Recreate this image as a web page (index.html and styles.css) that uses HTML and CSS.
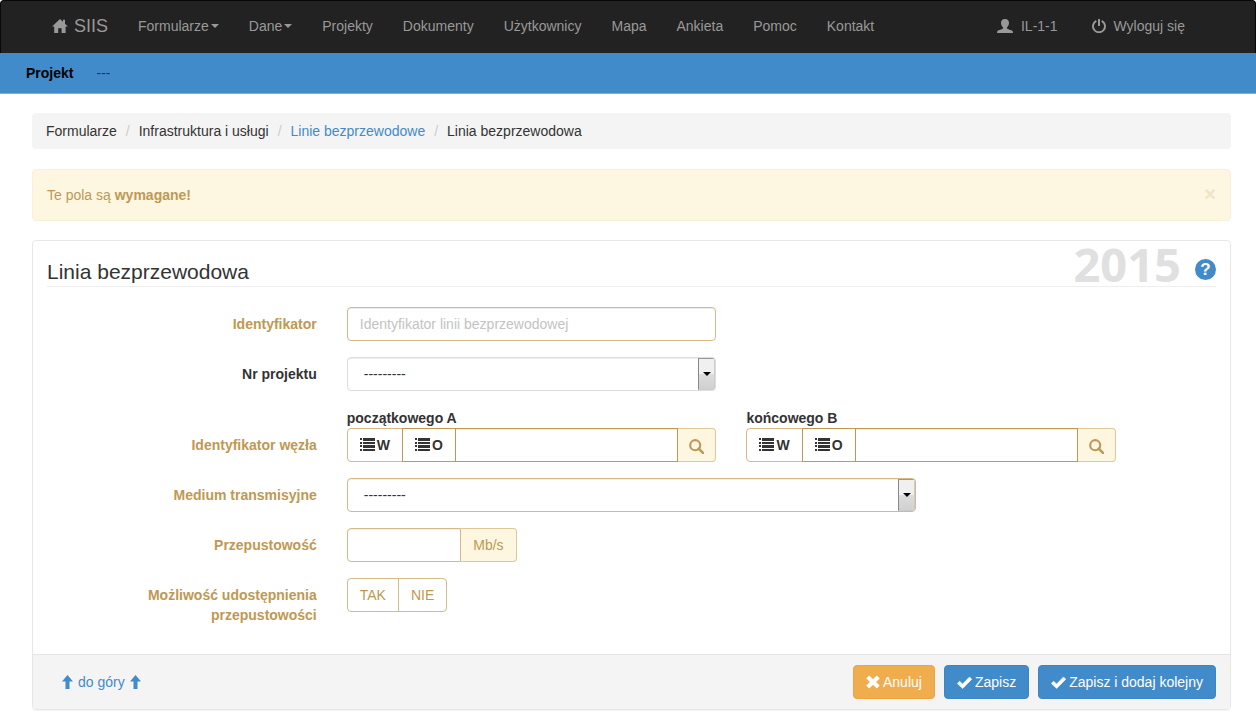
FILE: index.html
```html
<!DOCTYPE html>
<html lang="pl">
<head>
<meta charset="utf-8">
<meta name="viewport" content="width=device-width, initial-scale=1">
<title>SIIS – Linia bezprzewodowa</title>
<link rel="stylesheet" href="styles.css">
</head>
<body>
<svg class="sprite" aria-hidden="true">
  <symbol id="i-home" viewBox="0 0 16 14"><path d="M8 0 0 7.6h2.2V14h4V9.2h3.4V14h4V7.6H16L13 4.700V.8h-2v2z"/></symbol>
  <symbol id="i-user" viewBox="0 0 16 14"><path d="M8 0C5.500 0 4 1.500 4 3.800c0 2 .9 3.700 2 4.600v1.200c-.4.8-4.500 1.400-5.500 2.400-.4.500-.5 1.200-.5 2h16c0-.8-.1-1.500-.5-2-1-1-5.100-1.600-5.500-2.400V8.400c1.100-.9 2-2.600 2-4.600C12 1.500 10.500 0 8 0z"/></symbol>
  <symbol id="i-power" viewBox="0 0 14 14"><path d="M4.300 1.900A6 6 0 1 0 9.700 1.900" fill="none" stroke="currentColor" stroke-width="1.900"/><path d="M6 0h2v7H6z"/></symbol>
  <symbol id="i-list" viewBox="0 0 15 14"><path d="M0 0h2v2H0zM3 0h12v3H3zM0 4h2v2H0zM3 4h12v2H3zM0 7h2v2H0zM3 7h12v3H3zM0 11h2v2H0zM3 11h12v2H3z"/></symbol>
  <symbol id="i-search" viewBox="0 0 14 14"><circle cx="5.800" cy="5.800" r="4.700" fill="none" stroke="currentColor" stroke-width="2"/><path d="m9 9 4 4" fill="none" stroke="currentColor" stroke-width="2.400" stroke-linecap="round"/></symbol>
  <symbol id="i-up" viewBox="0 0 11 14"><path d="M5.500 0 11 6.500H7.500V14h-4V6.500H0z"/></symbol>
  <symbol id="i-x" viewBox="0 0 14 14"><path d="M3.200 1 7 4.600 10.800 1 13.200 3.400 9.600 7l3.600 3.600-2.400 2.400L7 9.400 3.200 13 .8 10.600 4.400 7 .8 3.400z" stroke="currentColor" stroke-linejoin="round" stroke-width=".9"/></symbol>
  <symbol id="i-check" viewBox="0 0 15 13"><path d="M.3 7.600 2.600 5.200 5.600 8 12.500.9l2.300 2.300L5.700 12.500z" stroke="currentColor" stroke-linejoin="round" stroke-width=".5"/></symbol>
  <symbol id="i-down" viewBox="0 0 8 4"><path d="M0 0h8L4 4z"/></symbol>
</svg>

<header>
  <nav class="navbar">
    <a class="brand" href="#"><svg class="icon icon-home"><use href="#i-home"/></svg>SIIS</a>
    <ul class="nav">
      <li><a href="#">Formularze<svg class="caret"><use href="#i-down"/></svg></a></li>
      <li><a href="#">Dane<svg class="caret"><use href="#i-down"/></svg></a></li>
      <li><a href="#">Projekty</a></li>
      <li><a href="#">Dokumenty</a></li>
      <li><a href="#">Użytkownicy</a></li>
      <li><a href="#">Mapa</a></li>
      <li><a href="#">Ankieta</a></li>
      <li><a href="#">Pomoc</a></li>
      <li><a href="#">Kontakt</a></li>
    </ul>
    <ul class="nav nav-user">
      <li><a href="#"><svg class="icon icon-user"><use href="#i-user"/></svg>IL-1-1</a></li>
      <li><a href="#"><svg class="icon icon-power"><use href="#i-power"/></svg>Wyloguj się</a></li>
    </ul>
  </nav>
  <div class="project-bar"><strong>Projekt</strong><span>---</span></div>
</header>

<main>
  <nav aria-label="Ścieżka">
    <ol class="breadcrumb">
      <li>Formularze</li>
      <li>Infrastruktura i usługi</li>
      <li><a href="#">Linie bezprzewodowe</a></li>
      <li>Linia bezprzewodowa</li>
    </ol>
  </nav>

  <div class="alert">
    <p>Te pola są <strong>wymagane!</strong></p>
    <button class="close" type="button" aria-label="Zamknij">×</button>
  </div>

  <form class="panel">
    <div class="panel-body">
      <div class="panel-title">
        <h1>Linia bezprzewodowa</h1>
        <span class="year">2015</span>
        <button class="help" type="button" aria-label="Pomoc">?</button>
      </div>

      <div class="fields">
        <div class="row required">
          <label class="name" for="ident">Identyfikator</label>
          <input class="control span-4" id="ident" type="text" placeholder="Identyfikator linii bezprzewodowej">
        </div>
        <div class="row">
          <label class="name" for="project">Nr projektu</label>
          <div class="select span-4">
            <select id="project"><option>---------</option></select>
            <span class="arrow"><svg><use href="#i-down"/></svg></span>
          </div>
        </div>
        <div class="row row-nodes required">
          <span class="name">Identyfikator węzła</span>
          <div class="node span-4">
            <label for="node-a">początkowego A</label>
            <div class="group">
              <button class="pick" type="button"><svg class="icon icon-list"><use href="#i-list"/></svg>W</button>
              <button class="pick pick-strong" type="button"><svg class="icon icon-list"><use href="#i-list"/></svg>O</button>
              <input class="control" id="node-a" type="text">
              <button class="addon" type="button" aria-label="Szukaj"><svg class="icon icon-search"><use href="#i-search"/></svg></button>
            </div>
          </div>
          <div class="node span-4">
            <label for="node-b">końcowego B</label>
            <div class="group">
              <button class="pick" type="button"><svg class="icon icon-list"><use href="#i-list"/></svg>W</button>
              <button class="pick pick-strong" type="button"><svg class="icon icon-list"><use href="#i-list"/></svg>O</button>
              <input class="control" id="node-b" type="text">
              <button class="addon" type="button" aria-label="Szukaj"><svg class="icon icon-search"><use href="#i-search"/></svg></button>
            </div>
          </div>
        </div>
        <div class="row required">
          <label class="name" for="medium">Medium transmisyjne</label>
          <div class="select span-6">
            <select id="medium"><option>---------</option></select>
            <span class="arrow"><svg><use href="#i-down"/></svg></span>
          </div>
        </div>
        <div class="row required">
          <label class="name" for="speed">Przepustowość</label>
          <div class="amount span-2">
            <input class="control" id="speed" type="text">
            <span class="unit">Mb/s</span>
          </div>
        </div>
        <div class="row required">
          <span class="name">Możliwość udostępnienia przepustowości</span>
          <div class="toggle span-4">
            <button type="button">TAK</button>
            <button type="button">NIE</button>
          </div>
        </div>
      </div>
    </div>

    <footer class="panel-footer">
      <a class="to-top" href="#"><svg class="icon icon-up"><use href="#i-up"/></svg>do góry<svg class="icon icon-up"><use href="#i-up"/></svg></a>
      <div class="actions">
        <button class="btn btn-cancel" type="button"><svg class="icon icon-x"><use href="#i-x"/></svg>Anuluj</button>
        <button class="btn" type="submit"><svg class="icon icon-check"><use href="#i-check"/></svg>Zapisz</button>
        <button class="btn" type="submit"><svg class="icon icon-check"><use href="#i-check"/></svg>Zapisz i dodaj kolejny</button>
      </div>
    </footer>
  </form>
</main>
</body>
</html>
```
FILE: styles.css
```css
:root {
  --warn: #c09853;
  --warn-light: #d5b987;
  --warn-bg: #fdf7e2;
  --blue: #428bca;
  --grey: #f4f4f4;
  --text: #333;
}

* { box-sizing: border-box; }

body {
  margin: 0;
  background: #fff;
  color: var(--text);
  font: 14px/20px "Liberation Sans", Arial, sans-serif;
}

a { color: var(--blue); text-decoration: none; }
button, input, select { font: inherit; color: inherit; margin: 0; }
button { cursor: pointer; }
ul, ol { list-style: none; margin: 0; padding: 0; }
h1, p { margin: 0; }

.sprite { display: none; }
.icon { flex: none; fill: currentColor; }
.icon-home { width: 16px; height: 14px; }
.icon-user { width: 16px; height: 14px; }
.icon-power { width: 14px; height: 14px; }
.icon-list { width: 15px; height: 14px; }
.icon-search { width: 15px; height: 15px; }
.icon-up { width: 11px; height: 14px; }
.icon-x { width: 14px; height: 14px; }
.icon-check { width: 15px; height: 13px; }

/* Top bar */
.navbar {
  display: flex;
  align-items: center;
  padding: 0 55px 0 36px;
  background: #222;
  border: 1px solid #080808;
  border-bottom: 0;
  border-radius: 4px 4px 0 0;
}
.navbar a { display: flex; align-items: center; padding: 15px 15px 17px; color: #999; }
.navbar .brand { gap: 6px; font-size: 18px; }
.nav { display: flex; }
.nav-user { margin-left: auto; gap: 4px; }
.nav-user a { gap: 8px; }
.nav .caret { width: 8px; height: 4px; margin-left: 2px; fill: currentColor; }

.project-bar {
  display: flex;
  gap: 23px;
  padding: 10px 26px;
  background: var(--blue);
  border-bottom: 1px solid #a0a5ab;
}
.project-bar strong { color: #000; }

main { padding: 19px 25px 8px 32px; }

.breadcrumb {
  display: flex;
  flex-wrap: wrap;
  padding: 8px 14px;
  margin-bottom: 20px;
  background: var(--grey);
  border-radius: 4px;
}
.breadcrumb li + li::before { content: "/"; margin: 0 9px; color: #ccc; }

.alert {
  display: flex;
  justify-content: space-between;
  padding: 15px 14px;
  margin-bottom: 19px;
  color: var(--warn);
  background: var(--warn-bg);
  border: 1px solid #fbf0d5;
  border-radius: 4px;
}
.close {
  height: 18px;
  padding: 0;
  border: 0;
  background: none;
  color: #f0e4c6;
  font-size: 20px;
  font-weight: bold;
  line-height: 16px;
}

/* Form panel */
.panel {
  border: 1px solid #e7e7e7;
  border-radius: 4px;
  box-shadow: 0 1px 1px rgba(0, 0, 0, .05);
}
.panel-body { padding: 0 14px; }
.panel-title { display: flex; align-items: center; height: 46px; border-bottom: 1px solid #eee; }
h1 { flex: 1; padding-top: 17px; font-size: 21px; font-weight: normal; line-height: 28px; }
.year {
  margin-right: 14px;
  color: #e0e0e0;
  font: bold 47px/44px "Open Sans", sans-serif;
}
.help {
  width: 21px;
  height: 21px;
  margin-top: 12px;
  padding: 0;
  border: 0;
  border-radius: 50%;
  background: var(--blue);
  color: #fff;
  font-size: 17px;
  font-weight: bold;
  line-height: 21px;
}

.fields { display: grid; gap: 16px; padding: 20px 0 29px; }
.row { display: grid; grid-template-columns: repeat(12, minmax(0, 1fr)); column-gap: 30px; align-items: start; }
.name { grid-column: span 3; padding-top: 7px; text-align: right; font-weight: bold; }
.required .name { color: var(--warn); }
.row-nodes .name { padding-top: 28px; }
.span-2 { grid-column: span 2; }
.span-4 { grid-column: span 4; }
.span-6 { grid-column: span 6; }

.control {
  width: 100%;
  min-width: 0;
  height: 34px;
  padding: 6px 12px;
  background: #fff;
  border: 1px solid #ccc;
  border-radius: 4px;
  box-shadow: inset 0 1px 1px rgba(0, 0, 0, .075);
}
.control::placeholder { color: #c3c3c3; opacity: 1; }
.required .control { border-color: var(--warn-light); }

.select {
  position: relative;
  height: 34px;
  border: 1px solid #ddd;
  border-radius: 4px;
  overflow: hidden;
  box-shadow: inset 0 1px 1px rgba(0, 0, 0, .075);
}
.required .select { border-color: var(--warn-light); }
.select select {
  appearance: none;
  width: 100%;
  height: 100%;
  padding: 0 32px 0 16px;
  border: 0;
  background: transparent;
}
.arrow {
  position: absolute;
  top: 0;
  right: 0;
  bottom: 0;
  display: grid;
  place-items: center;
  width: 17px;
  border: 1px solid #ccc;
  border-left-color: #888;
  border-top-color: #999;
  background: linear-gradient(#f0f0f0 50%, #ddd 50%, #d0d0d0);
  pointer-events: none;
}
.arrow svg { width: 8px; height: 4px; fill: #000; }

.node label { display: block; padding-top: 1px; font-weight: bold; }
.group, .amount, .toggle { display: flex; }
.pick {
  display: flex;
  align-items: center;
  gap: 2px;
  height: 34px;
  padding: 0 12px;
  background: #fff;
  border: 1px solid var(--warn-light);
  border-radius: 4px 0 0 4px;
  font-weight: bold;
}
.pick-strong { margin-left: -1px; border-color: var(--warn); border-radius: 0; }
.required .group .control { flex: 1; margin-left: -1px; border-color: var(--warn); border-radius: 0; }
.addon, .unit {
  display: grid;
  place-items: center;
  height: 34px;
  padding: 0 12px;
  border: 1px solid #dfc797;
  border-left: 0;
  border-radius: 0 4px 4px 0;
  background: var(--warn-bg);
  color: var(--warn);
}
.addon { padding: 2px 11px 0; }
.amount .control { border-radius: 4px 0 0 4px; }

.toggle button {
  height: 34px;
  padding: 0 12px;
  background: #fff;
  border: 1px solid var(--warn-light);
  color: var(--warn);
}
.toggle button:first-child { border-radius: 4px 0 0 4px; }
.toggle button:last-child { margin-left: -1px; border-radius: 0 4px 4px 0; }

.panel-footer {
  display: flex;
  align-items: center;
  justify-content: space-between;
  padding: 10px 14px;
  background: var(--grey);
  border-top: 1px solid #e5e5e5;
  border-radius: 0 0 3px 3px;
}
.to-top { display: flex; align-items: center; gap: 5px; padding-left: 15px; }
.actions { display: flex; gap: 9px; }
.btn {
  display: flex;
  align-items: center;
  gap: 3px;
  height: 34px;
  padding: 0 12px;
  color: #fff;
  background: var(--blue);
  border: 1px solid #3d86c5;
  border-radius: 4px;
}
.btn-cancel { background: #f0ad4e; border-color: #eea540; }
```
